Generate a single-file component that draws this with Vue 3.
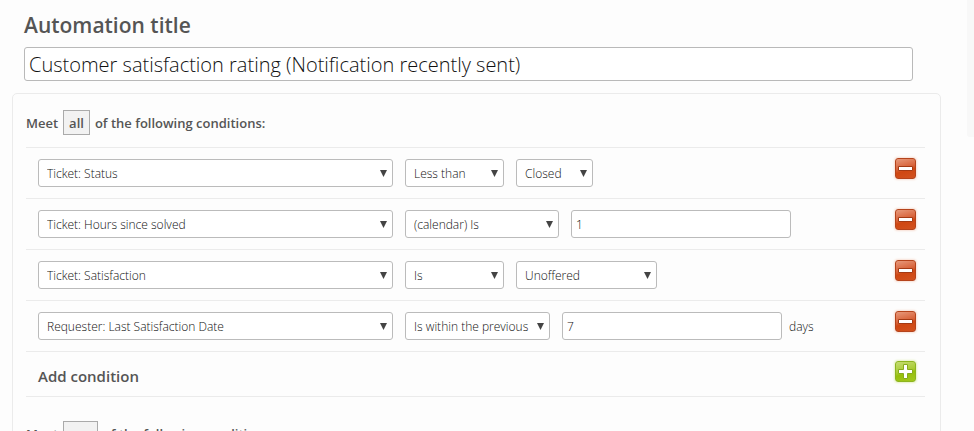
<script setup>
import { ref } from 'vue'

const title = ref('Customer satisfaction rating (Notification recently sent)')

const conditions = ref([
  {
    field: 'Ticket: Status',
    operator: 'Less than',
    operatorSize: 'small',
    value: 'Closed',
    valueSize: 'tiny',
  },
  {
    field: 'Ticket: Hours since solved',
    operator: '(calendar) Is',
    operatorSize: 'large',
    text: '1',
  },
  {
    field: 'Ticket: Satisfaction',
    operator: 'Is',
    operatorSize: 'small',
    value: 'Unoffered',
    valueSize: 'medium',
  },
  {
    field: 'Requester: Last Satisfaction Date',
    operator: 'Is within the previous',
    operatorSize: 'wide',
    text: '7',
    unit: 'days',
  },
])

function remove(index) {
  conditions.value.splice(index, 1)
}

function add() {
  conditions.value.push({
    field: 'Ticket: Status',
    operator: 'Is',
    operatorSize: 'small',
    value: 'Closed',
    valueSize: 'tiny',
  })
}
</script>

<template>
  <div class="page">
    <main class="main">
      <div class="title-block">
        <label class="title-label" for="automation-title">Automation title</label>
        <input id="automation-title" v-model="title" class="title-input" type="text" />
      </div>

      <section class="panel">
        <h2 class="meet">
          <span>Meet</span><span class="match">all</span><span>of the following conditions:</span>
        </h2>

        <ul class="rows">
          <li v-for="(c, i) in conditions" :key="i" class="row">
            <div class="fields">
              <span class="drop field">
                <select aria-label="Field">
                  <option>{{ c.field }}</option>
                </select>
              </span>
              <span class="drop" :class="c.operatorSize">
                <select aria-label="Operator">
                  <option>{{ c.operator }}</option>
                </select>
              </span>
              <span v-if="c.value" class="drop" :class="c.valueSize">
                <select aria-label="Value">
                  <option>{{ c.value }}</option>
                </select>
              </span>
              <label v-else class="text-value">
                <input v-model="c.text" type="text" aria-label="Value" />
                <span v-if="c.unit">{{ c.unit }}</span>
              </label>
            </div>
            <button class="icon-button remove" type="button" aria-label="Remove condition" @click="remove(i)">
              <svg viewBox="0 0 21 21" aria-hidden="true">
                <path d="M3.5 8.5h14v4h-14z" fill="#fff" stroke="#a33a14" />
              </svg>
            </button>
          </li>
          <li class="row add-row">
            <span class="add-label">Add condition</span>
            <button class="icon-button add" type="button" aria-label="Add condition" @click="add">
              <svg viewBox="0 0 21 21" aria-hidden="true">
                <path d="M8.5 3.5h4v5h5v4h-5v5h-4v-5h-5v-4h5z" fill="#fff" stroke="#86ab1c" />
              </svg>
            </button>
          </li>
        </ul>

        <h2 class="meet second">
          <span>Meet</span><span class="match">any</span><span>of the following conditions:</span>
        </h2>
      </section>
    </main>
    <aside class="rail"></aside>
  </div>
</template>

<style>
body {
  background: #fdfdfd;
}
</style>

<style scoped>
.page {
  display: flex;
  align-items: flex-start;
  height: 100vh;
  overflow: hidden;
  color: #555;
  font-family: 'Open Sans', 'Noto Sans', sans-serif;
  font-size: 12px;
}

.page * {
  box-sizing: border-box;
}

.main {
  flex: 1;
  min-width: 0;
  padding: 10px 26px 0 12px;
}

.rail {
  flex: none;
  width: 7px;
  height: 137px;
  background: #f8f8f8;
  border-bottom-left-radius: 3px;
}

.title-block {
  padding: 0 28px 12px 12px;
}

.title-label {
  display: block;
  margin-bottom: 7px;
  font-size: 21px;
  font-weight: 600;
  line-height: 30px;
}

.title-input {
  display: block;
  width: 100%;
  height: 34px;
  padding: 0 4px;
  border: 1px solid #b9b9b9;
  border-radius: 3px;
  background: #fff;
  color: #111;
  font-family: inherit;
  font-size: 20px;
  font-weight: 300;
}

.panel {
  padding: 16px 15px 24px 13px;
  border: 1px solid #ebebeb;
  border-radius: 5px;
}

.meet {
  display: flex;
  align-items: center;
  gap: 5px;
  margin: 0 0 12px;
  font-size: 13px;
  font-weight: 600;
  line-height: 25px;
}

.meet > span {
  height: 25px;
  padding-top: 1px;
}

.meet > .match {
  padding: 0 5px;
  border: 1px solid #aaa;
  background: #f2f2f2;
}

.second {
  margin-top: 24px;
}

.rows {
  margin: 0;
  padding: 0;
  border-bottom: 1px solid #ebebeb;
  list-style: none;
}

.row {
  display: flex;
  align-items: flex-start;
  justify-content: space-between;
  padding: 10px 9px 11px 12px;
  border-top: 1px solid #ebebeb;
}

.fields {
  display: flex;
  flex: 1;
  gap: 12px;
  min-width: 0;
  padding-top: 1px;
}

.drop {
  position: relative;
  height: 28px;
}

.drop::after {
  position: absolute;
  top: 11px;
  right: 6px;
  width: 7px;
  height: 7px;
  background: #444;
  clip-path: polygon(0 0, 100% 0, 50% 100%);
  content: '';
  pointer-events: none;
}

.field {
  flex: 0 1 355px;
}

.tiny {
  flex: 0 0 77px;
}

.small {
  flex: 0 0 99px;
}

.medium {
  flex: 0 0 141px;
}

.wide {
  flex: 0 0 145px;
}

.large {
  flex: 0 0 154px;
}

select,
.text-value input {
  height: 28px;
  margin: 0;
  border: 1px solid #bbb;
  border-radius: 3px;
  background: #fff;
  color: #111;
  font-family: inherit;
  font-size: 12px;
  font-weight: 300;
}

select {
  width: 100%;
  padding: 1px 12px 0 8px;
  appearance: none;
}

.text-value {
  display: flex;
  align-items: center;
  gap: 7px;
  color: #111;
  font-weight: 300;
}

.text-value input {
  width: 220px;
  padding: 1px 4px 0;
}

.icon-button {
  flex: none;
  width: 21px;
  height: 21px;
  padding: 0;
  border: 1px solid;
  border-radius: 3px;
}

.icon-button svg {
  display: block;
  width: 21px;
  height: 21px;
  margin: -1px;
}

.remove {
  border-color: #b5441c;
  background: linear-gradient(165deg, #e79a7c 0%, #d8633a 45%, #cf4712 60%, #d2521f 100%);
  box-shadow: 0 0 2px 1px #f8dfd4;
}

.add {
  border-color: #8db51f;
  background: linear-gradient(165deg, #c5dc72 0%, #a9cc34 45%, #96bf0a 60%, #a3c81f 100%);
  box-shadow: 0 0 2px 1px #e6f1c0;
}

.add-row {
  padding: 9px 9px 9px 12px;
}

.add-label {
  padding-top: 4px;
  font-size: 15px;
  font-weight: 600;
  line-height: 22px;
}
</style>
